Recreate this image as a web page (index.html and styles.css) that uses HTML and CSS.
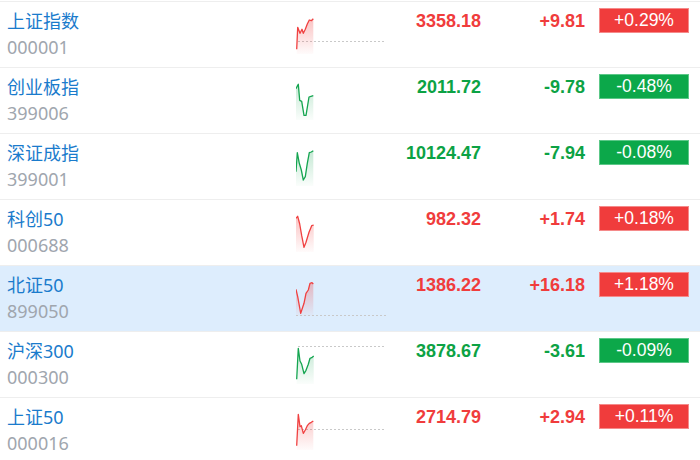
FILE: index.html
```html
<!DOCTYPE html>
<html lang="zh-CN">
<head>
    <meta charset="UTF-8">
    <meta name="viewport" content="width=device-width, initial-scale=1.0">
    <title>指数行情</title>
    <link rel="stylesheet" href="styles.css">
</head>
<body>
    <div class="quote-list">
        <!-- 上证指数 -->
        <div class="row">
            <div class="name-cell">
                <div class="name">上证指数</div>
                <div class="code">000001</div>
            </div>
            <div class="chart">
                <svg width="92" height="44" viewBox="0 0 92 44">
                    <defs>
                        <linearGradient id="fillUp" x1="0" y1="0" x2="0" y2="1">
                            <stop offset="0" stop-color="#f04040" stop-opacity="0.32"/>
                            <stop offset="1" stop-color="#f04040" stop-opacity="0.02"/>
                        </linearGradient>
                        <linearGradient id="fillDown" x1="0" y1="0" x2="0" y2="1">
                            <stop offset="0" stop-color="#14a550" stop-opacity="0.25"/>
                            <stop offset="1" stop-color="#14a550" stop-opacity="0.02"/>
                        </linearGradient>
                    </defs>
                    <line class="base" x1="2" y1="29.5" x2="90" y2="29.5"/>
                    <polygon class="area-up" points="0.7,37.3 1.7,15.3 4,21.3 6,17.3 7.3,21.3 9.3,17.3 11.3,12 13.3,8 15.3,8.7 17.3,6.7 17.3,42 0.7,42"/>
                    <polyline class="line-up" points="0.7,37.3 1.7,15.3 4,21.3 6,17.3 7.3,21.3 9.3,17.3 11.3,12 13.3,8 15.3,8.7 17.3,6.7"/>
                </svg>
            </div>
            <div class="price up">3358.18</div>
            <div class="change up">+9.81</div>
            <div class="badge-cell"><span class="badge up">+0.29%</span></div>
        </div>

        <!-- 创业板指 -->
        <div class="row">
            <div class="name-cell">
                <div class="name">创业板指</div>
                <div class="code">399006</div>
            </div>
            <div class="chart">
                <svg width="92" height="44" viewBox="0 0 92 44">
                    <polygon class="area-down" points="0,10.7 1.7,7.3 2.3,6.3 3.7,22.3 5.7,23.3 8,37.3 10,37.3 13,19 15,18.3 17.3,17.7 17.3,42 0,42"/>
                    <polyline class="line-down" points="0,10.7 1.7,7.3 2.3,6.3 3.7,22.3 5.7,23.3 8,37.3 10,37.3 13,19 15,18.3 17.3,17.7"/>
                </svg>
            </div>
            <div class="price down">2011.72</div>
            <div class="change down">-9.78</div>
            <div class="badge-cell"><span class="badge down">-0.48%</span></div>
        </div>

        <!-- 深证成指 -->
        <div class="row">
            <div class="name-cell">
                <div class="name">深证成指</div>
                <div class="code">399001</div>
            </div>
            <div class="chart">
                <svg width="92" height="44" viewBox="0 0 92 44">
                    <polygon class="area-down" points="0,27.7 1.3,8.7 3.3,19.3 5.3,26 7.3,36 9.3,32.7 11.3,19.3 13.3,8.7 15.3,8 17.3,6.7 17.3,42 0,42"/>
                    <polyline class="line-down" points="0,27.7 1.3,8.7 3.3,19.3 5.3,26 7.3,36 9.3,32.7 11.3,19.3 13.3,8.7 15.3,8 17.3,6.7"/>
                </svg>
            </div>
            <div class="price down">10124.47</div>
            <div class="change down">-7.94</div>
            <div class="badge-cell"><span class="badge down">-0.08%</span></div>
        </div>

        <!-- 科创50 -->
        <div class="row">
            <div class="name-cell">
                <div class="name">科创50</div>
                <div class="code">000688</div>
            </div>
            <div class="chart">
                <svg width="92" height="44" viewBox="0 0 92 44">
                    <polygon class="area-up" points="0,8.3 1.7,6.3 3.7,14 5.7,25.7 8,37.3 10,32.3 13,22.3 15.7,15.7 17.7,15 17.7,42 0,42"/>
                    <polyline class="line-up" points="0,8.3 1.7,6.3 3.7,14 5.7,25.7 8,37.3 10,32.3 13,22.3 15.7,15.7 17.7,15"/>
                </svg>
            </div>
            <div class="price up">982.32</div>
            <div class="change up">+1.74</div>
            <div class="badge-cell"><span class="badge up">+0.18%</span></div>
        </div>

        <!-- 北证50 -->
        <div class="row active">
            <div class="name-cell">
                <div class="name">北证50</div>
                <div class="code">899050</div>
            </div>
            <div class="chart">
                <svg width="92" height="44" viewBox="0 0 92 44">
                    <line class="base" x1="0" y1="39.5" x2="90" y2="39.5"/>
                    <polygon class="area-up" points="0,13.3 1.7,20.7 4.7,37.3 8,27.3 10,17.3 12.3,14 14,7.3 16,6.7 17.3,8 17.3,40 0,40"/>
                    <polyline class="line-up" points="0,13.3 1.7,20.7 4.7,37.3 8,27.3 10,17.3 12.3,14 14,7.3 16,6.7 17.3,8"/>
                </svg>
            </div>
            <div class="price up">1386.22</div>
            <div class="change up">+16.18</div>
            <div class="badge-cell"><span class="badge up">+1.18%</span></div>
        </div>

        <!-- 沪深300 -->
        <div class="row">
            <div class="name-cell">
                <div class="name">沪深300</div>
                <div class="code">000300</div>
            </div>
            <div class="chart">
                <svg width="92" height="44" viewBox="0 0 92 44">
                    <line class="base" x1="2" y1="4.5" x2="90" y2="4.5"/>
                    <polygon class="area-down" points="0.7,37.3 2.3,6.3 4,19 5.7,22.3 8,31.7 10,28.3 12.3,22.3 14,16.3 15.7,15.7 17.7,14 17.7,42 0.7,42"/>
                    <polyline class="line-down" points="0.7,37.3 2.3,6.3 4,19 5.7,22.3 8,31.7 10,28.3 12.3,22.3 14,16.3 15.7,15.7 17.7,14"/>
                </svg>
            </div>
            <div class="price down">3878.67</div>
            <div class="change down">-3.61</div>
            <div class="badge-cell"><span class="badge down">-0.09%</span></div>
        </div>

        <!-- 上证50 -->
        <div class="row">
            <div class="name-cell">
                <div class="name">上证50</div>
                <div class="code">000016</div>
            </div>
            <div class="chart">
                <svg width="92" height="44" viewBox="0 0 92 44">
                    <line class="base" x1="2" y1="21.5" x2="90" y2="21.5"/>
                    <polygon class="area-up" points="0.7,37.7 2.3,6.3 4,18.7 5.3,17.7 7.3,25.3 9.3,22 11.3,17.7 13.3,15.3 15.3,14.3 17.3,13 17.3,42 0.7,42"/>
                    <polyline class="line-up" points="0.7,37.7 2.3,6.3 4,18.7 5.3,17.7 7.3,25.3 9.3,22 11.3,17.7 13.3,15.3 15.3,14.3 17.3,13"/>
                </svg>
            </div>
            <div class="price up">2714.79</div>
            <div class="change up">+2.94</div>
            <div class="badge-cell"><span class="badge up">+0.11%</span></div>
        </div>
    </div>
</body>
</html>
```

FILE: styles.css
```css
body {
    margin: 0;
    padding-top: 1px;
    background: #fff;
    font-family: "Noto Sans", "Noto Sans CJK SC", sans-serif;
}
.quote-list {
    border-top: 1px solid #eeeeee;
}
.row {
    display: grid;
    grid-template-columns: 290px 100px 91px 104px 1fr;
    height: 65px;
    border-bottom: 1px solid #eeeeee;
}
.row.active {
    background: #ddedfd;
}
.name-cell {
    padding: 6px 0 0 7px;
    font-size: 18px;
    line-height: 26px;
}
.name {
    color: #1a7bcc;
}
.code {
    color: #a0a6ae;
}
.chart {
    padding: 10px 0 0 6px;
}
.chart svg {
    display: block;
}
.base {
    stroke: #c9c9c9;
    stroke-width: 1;
    stroke-dasharray: 2 2;
}
.line-up,
.line-down {
    fill: none;
    stroke-width: 1.3;
    stroke-linejoin: round;
}
.line-up {
    stroke: #f04040;
}
.line-down {
    stroke: #14a550;
}
.area-up {
    fill: url(#fillUp);
}
.area-down {
    fill: url(#fillDown);
}
.price,
.change {
    text-align: right;
    padding-top: 9px;
    font: bold 18px/20px "Liberation Sans", Arial, sans-serif;
}
.up {
    color: #f03c3c;
}
.down {
    color: #0ca244;
}
.badge-cell {
    padding: 6px 0 0 14px;
}
.badge {
    display: block;
    box-sizing: border-box;
    width: 90px;
    height: 25px;
    text-align: center;
    font: 17.5px/23px "Liberation Sans", Arial, sans-serif;
}
.badge.up {
    background: #f03c3c;
    border: 1px solid #f58a8a;
    color: #fff;
}
.badge.down {
    background: #0ca84a;
    border: 1px solid #5cc888;
    color: #fff;
}
```
